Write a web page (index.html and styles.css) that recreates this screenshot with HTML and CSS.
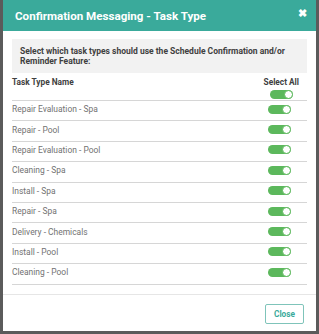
FILE: index.html
```html
<!DOCTYPE html>
<html lang="en">
<head>
    <meta charset="UTF-8">
    <meta name="viewport" content="width=device-width, initial-scale=1.0">
    <title>Confirmation Messaging - Task Type</title>
    <link rel="stylesheet" href="styles.css">
</head>
<body>
    <div class="modal">
        <div class="modal-header">
            <h2>Confirmation Messaging - Task Type</h2>
            <span class="close-x">&#10006;</span>
        </div>

        <div class="modal-body">
            <div class="info-box">
                Select which task types should use the Schedule Confirmation and/or Reminder Feature:
            </div>

            <div class="table-head">
                <div class="col-name">Task Type Name</div>
                <div class="col-select">
                    <span>Select All</span>
                    <span class="toggle"></span>
                </div>
            </div>

            <ul class="task-list">
                <li><span>Repair Evaluation - Spa</span><span class="toggle"></span></li>
                <li><span>Repair - Pool</span><span class="toggle"></span></li>
                <li><span>Repair Evaluation - Pool</span><span class="toggle"></span></li>
                <li><span>Cleaning - Spa</span><span class="toggle"></span></li>
                <li><span>Install - Spa</span><span class="toggle"></span></li>
                <li><span>Repair - Spa</span><span class="toggle"></span></li>
                <li><span>Delivery - Chemicals</span><span class="toggle"></span></li>
                <li><span>Install - Pool</span><span class="toggle"></span></li>
                <li><span>Cleaning - Pool</span><span class="toggle"></span></li>
            </ul>
        </div>

        <div class="modal-footer">
            <button class="btn-close">Close</button>
        </div>
    </div>
</body>
</html>
```

FILE: styles.css
```css
* {
    margin: 0;
    padding: 0;
    box-sizing: border-box;
    font-family: Roboto, 'Liberation Sans', sans-serif;
}

body {
    background: #5b5b5b;
    width: 319px;
    height: 334px;
    overflow: hidden;
}

.modal {
    background: #fff;
    margin: 0 3px 0 3px;
    height: 331px;
    display: flex;
    flex-direction: column;
}

.modal-header {
    background: #3aaa9b;
    height: 31px;
    padding: 0 9px 0 12px;
    display: flex;
    justify-content: space-between;
    align-items: center;
    flex-shrink: 0;
}

.modal-header h2 {
    color: #fff;
    font-size: 11.6px;
    font-weight: 700;
}

.close-x {
    color: #fff;
    font-size: 11px;
    font-weight: 700;
    margin-top: -5px;
}

.modal-body {
    padding: 8px 9px 0 9px;
    flex: 1;
}

.info-box {
    background: #f2f2f2;
    color: #404040;
    font-size: 8.5px;
    font-weight: 700;
    line-height: 9.5px;
    padding: 8px 8px 6px 8px;
    height: 34px;
}

.table-head {
    display: flex;
    justify-content: space-between;
    margin-top: 4px;
    color: #404040;
    font-size: 8.3px;
    font-weight: 700;
    height: 24px;
    border-bottom: 1.5px solid #d6d6d6;
}

.col-select {
    display: flex;
    flex-direction: column;
    align-items: center;
    gap: 3px;
    padding-right: 8px;
}

.task-list {
    list-style: none;
}

.task-list li {
    display: flex;
    justify-content: space-between;
    align-items: center;
    height: 20.4px;
    border-bottom: 1.5px solid #d6d6d6;
    color: #727272;
    font-size: 8.45px;
    padding: 0 16px 3px 0;
}

.toggle {
    display: inline-block;
    width: 23px;
    height: 9px;
    border-radius: 5px;
    background: #5cb85c;
    position: relative;
}

.toggle::after {
    content: '';
    position: absolute;
    right: 0;
    top: 0;
    width: 9px;
    height: 9px;
    border-radius: 50%;
    background: #fff;
    border: 1px solid #5cb85c;
    box-sizing: border-box;
}

.modal-footer {
    border-top: 1px solid #e6e6e6;
    margin-top: 9px;
    height: 37px;
    display: flex;
    justify-content: flex-end;
    align-items: center;
    padding-right: 12px;
    flex-shrink: 0;
}

.btn-close {
    background: #fff;
    border: 1px solid #7fc4ba;
    border-radius: 2px;
    color: #3aaa9b;
    font-size: 8.3px;
    font-weight: 700;
    width: 39px;
    height: 20px;
    margin-top: 1px;
}
```
